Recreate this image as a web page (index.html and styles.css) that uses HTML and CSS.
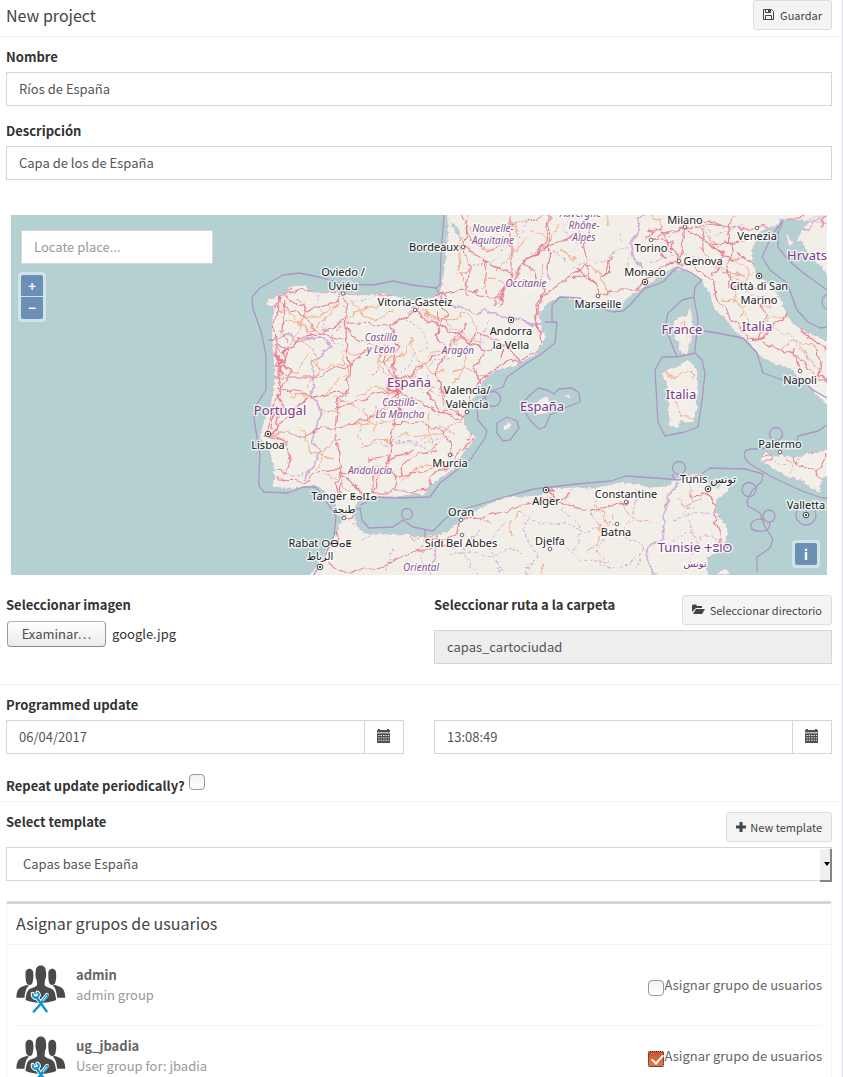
FILE: index.html
```html
<!DOCTYPE html>
<html lang="es">
<head>
<meta charset="utf-8">
<title>New project</title>
<link rel="stylesheet" href="styles.css">
</head>
<body>
<svg class="sprite" aria-hidden="true">
  <symbol id="calendar" viewBox="0 0 13 14">
    <path fill="#4f4f52" d="M0 1h1V0h2v1h7V0h2v1h1v13H0z"/>
    <path fill="#b8b8ba" d="M0 3h13v1.5H0z"/>
    <path stroke="#eee" stroke-width="1" stroke-dasharray="1.4 1" d="M1.3 6.5h10.8M1.3 8.9h10.8M1.3 11.3h10.8" fill="none"/>
  </symbol>
  <symbol id="group" viewBox="50 46 147 147">
    <g fill="#4a4a4a">
      <path d="M51 142c1-18 5-27 16-32l14-5 8 1c-8 5-12 16-14 36-9 1-16 0-24 0zM195 142c-1-18-5-27-16-32l-14-5-8 1c8 5 12 16 14 36 9 1 16 0 24 0z"/>
      <path d="M78 72c-1-20 24-20 23 0 1 14-1 18-2 24s-4 9-9 9-9-4-10-9-2-10-2-24zM145 72c-1-20 24-20 23 0 1 14-1 18-2 24s-4 9-9 9-9-4-10-9-2-10-2-24z"/>
      <path d="M108 65c0-23 30-23 30 0 2 14 0 20-3 26l-1 14c2 5 8 6 17 9 11 3 15 12 17 35-25 11-65 11-90 0 2-23 6-32 17-35 9-3 15-4 17-9l-1-14c-3-6-5-12-3-26z"/>
    </g>
    <g fill="none" stroke="#fff" stroke-width="12" stroke-linecap="round"><path d="M108 138l32 44M141 134l-38 47M99 131c0 10 7 14 13 10s8-8 1-14"/></g>
    <g fill="none" stroke="#1295c9" stroke-width="7" stroke-linecap="round"><path d="M110 141l30 41M126 157l-24 26"/><path stroke-width="6" d="M99 131c0 10 7 14 13 10s8-8 1-14"/></g>
    <path d="M128 153l14-18" stroke="#1295c9" stroke-width="9" stroke-linecap="round"/><path d="M129 151l12-15" stroke="#d4f0fa" stroke-width="3"/>
  </symbol>
</svg>
<form class="page">
  <header class="head">
    <h1 class="title">New project</h1>
    <button type="button" class="btn save"><svg width="11" height="11" viewBox="0 0 11 11" fill="none" stroke="#444"><path d="M.5.5h8l2 2v8H.5z M2.5 10.500V6.500h6v4M2.500.5v3h5v-3"/><path d="M5.500 1h1.500v2H5.500z" fill="#444"/></svg>Guardar</button>
  </header>

  <section class="section">
    <div class="field"><label class="label" for="name">Nombre</label><input class="input" id="name" value="Ríos de España"></div>
    <div class="field"><label class="label" for="desc">Descripción</label><input class="input" id="desc" value="Capa de los de España"></div>

    <div class="map">
      <svg class="tiles" viewBox="11 215 816 360" preserveAspectRatio="xMidYMid slice" role="img" aria-label="Mapa">
        <defs>
          <clipPath id="land"><use href="#coast"/></clipPath>
          <filter id="wander" filterUnits="userSpaceOnUse" x="11" y="205" width="830" height="380"><feTurbulence type="fractalNoise" baseFrequency=".07" numOctaves="3" seed="4"/><feDisplacementMap in="SourceGraphic" scale="11" xChannelSelector="R" yChannelSelector="G"/></filter>
          <filter id="rough" filterUnits="userSpaceOnUse" x="1" y="195" width="850" height="400"><feTurbulence type="fractalNoise" baseFrequency=".25" numOctaves="2" seed="8"/><feDisplacementMap in="SourceGraphic" scale="4" xChannelSelector="R" yChannelSelector="G"/></filter>
        </defs>
        <g filter="url(#rough)">
        <path id="coast" fill="#f2efe9" stroke="#c8b6d3" stroke-width=".7" stroke-linejoin="round" d="M272 320l1-13-7-2 2-6 6-1 4-4 5 2 4-6 5-4 8-1 7 1 2 5 14 2 14-1 23 3 24-2 16 4 10 4 14-1 10-4 4-2 3-7 3-18 4-40-3-25h400v20l-65-5v5l-20 8-8 19 1 13 4 10 10 8 13 15 7 17 7 10 13 8 27 12v67l-20-18-7-10-10-7-7-7-16-5-14-8-13-15-13-10-10-13-10-9-5-16-9-14-13-8-13-3-14 8-18 13-15 10-8 9-12-2-20-2-13-3-10-5-17 8-7 12 2 12 4 10-6 8-3 8-22 12-20 5-10 8-5 10-10 14-6 16 3 10 10 9-10 11-8 10-5 10-10 7-14 10-5 10-8-2-20 3-25 0-12 2-8 14-7 1-8-8-8-10-7-7-8-4-20 4-22-2 2-11-1-13-4-9-2-10-8-5 3-13 7-17 3-13 3-17-3-30z
          M300 590l27-40 10-20 5-12 8-6 5 5 2 8 8 8 22 1 13 1 8-2 5 4 20-2 14-3 10-9 16-11 20-10 14-5 33-2 7-6 26-2 20 1 14-3 13-3 13 1 17 4 18-1 9-8 20-5 10 5 3 9h10l8-7 6 3-7 10-10 7-2 12 7 6 6 12-1 10-7 10-12 8-1 9 5 23z
          M785 230l9 14 7-12 12-15h20v65l-12-15-12-12-8-14-6 1-6 5z
          M690 304l2 12 1 7-1 17-5 15-9-5 1-6-5-6 2-8-3-7 5-5 9-3z
          M688 359l9 11 1 10-1 27-4 15-8 1-4-3-3 8-8-1-2-4 2-4-2-6v-13l1-7-3-10-4-9 4-5 11-2z
          M760 460l5-8 5 1 2 4 8-2 17 2 16-5 20-3v23l-11 6-2 15-10-5-10-8-13-3-17-10z
          M532 407l9-9 7-2 2 7-5 11-7 1zM562 395l7 0 5 4-6-1zM503 427l4-4 5 1-3 5-5 1zM716 575l6-6 8 2-3 4z"/>
        <path fill="#b5d0d0" d="M450 222l5 2 5 8 2 10-6-9z"/>
        </g>

        <g fill="none" stroke="#ab97c3" stroke-width="1.300" stroke-linejoin="round">
          <path d="M444 215l-3 40-1 30-4 3-24-3-19-4-20 4-30-1-24-7-20-4-16 2-23 13-8 9 1 12 8 22 5 24v35l-9 14-3 15 6 36-1 17v14l5 6 24 1 15-6h13l20 29-2 20-10 22-12 20-15 12M268 340h6M436 288l4 6"/>
          <path d="M360 505L365 503 373 497 400 498 430 497 440 483 470 460 485 438 487 431 478 420 477 407 487 393 503 387 507 377 517 370 527 363 540 355 555 343 557 323 552 322 552 305 560 297 580 298 597 307 612 312 623 311 630 305 645 288 650 287 663 282 677 267 690 272 702 280 695 287 694 297 698 320 695 350 695 353 702 360 705 373 702 400 698 427 685 432 665 436 658 422 655 370 662 357 677 357 665 327 668 313 675 307 682 300 694 297M677 357L687 355 695 353M545 322h12"/>
          <circle cx="493" cy="399" r="7.500"/>
          <path d="M704 331L717 333 743 338 757 353 763 373 783 380 800 378 813 390 827 398M783 220L772 235 762 257 770 270 787 283 797 310 808 322 820 328 827 327M783 222L778 232 778 247 788 260 802 272 827 290"/>
          <path d="M355 510l5-2 2 12 7 8 24-1 10-7 10 7 20 4 13-13 15-8 30-9 43-12 42-5 35-3 15-5 15 1 28 2 9 1 22-5 10-7 35 1 18 5-1 7-10 10-5 10 1 5 12 7 5 14 8 12-3 9-13 9v15M425 530v8M675 480l-3-6"/>
          <circle cx="407" cy="514" r="5.500"/><circle cx="679" cy="468" r="6.500"/><circle cx="749" cy="489.500" r="7"/><circle cx="769" cy="516" r="6"/><path d="M764 520c-8-3-14 2-13 7s8 4 12 4 7-2 7-9"/><circle cx="806" cy="515" r="10"/><circle cx="776" cy="434" r="6.500"/><circle cx="830" cy="302" r="8"/>
          <path d="M827 498l-5 0-20-7-30-14-22-13c-8-7-8-15 3-15l22-1M796 448l2-12 20-5 9-6M497 423l10-6 10 4 2 7-9 12-7 1-6-8zM521 405l7-8 10-9 9 2 7 4 5-5 13-1 7 5 1 9-13 5-17 8-5 12-6 2-9-9z"/>
        </g>

        <g clip-path="url(#land)"><g filter="url(#wander)">
          <g fill="none" stroke="#c9a0d0" stroke-width="1.800" opacity=".8" stroke-linejoin="round">
            <path d="M275 338l10-6 8 1 5 8 9-2 18 0 6 7-8 5-3 8-7 3 1 23-6 8 10 10 3 13-7 17-3 10 12 8-11 12-6 15M440 292l17 15 20 6 5-4 22 8 20 6h22M656 575l-8-10-1-14 16-14 4-30 8-26M435 530v30l-4 15"/>
            <path d="M648 215l-11 4 2 10-9 14 6 20 10 9M783 228h25l8-9 11-2"/>
          </g>
          <g fill="none" stroke="#d3abd8" stroke-width="1" stroke-dasharray="3 2">
            <path d="M317 290l5 16 0 22 10 3-2 10 12 4M340 306l30-8 10-4M405 298l8 8-5 12 10 7 8 12 0 10-12 8-8 13-10 10M424 313l10 8 8-4M443 315l10 17 5 20-12 8-14 2-6 14 5 10 18 5 20-3M487 323l-6 30-5 20M460 275l15-10 18-3 14-17M515 252l10-28 6-6M530 252l17-6 14 10 13 10 11-2 4 3 17-4 10-14 10 0"/>
            <path d="M365 408l-5 24 3 14 24-2 26-3 6 3 20-5 9-2M409 443l15 3 8 5 5 22M430 428l12-1 15 5M412 377l8 15 22 4 22-4M277 470l15 5 15-3M650 262l18-6 13-3 19 5 13 8 14 10 15 17 20 5 12 12M655 228l14 8 9-6 22-5 15 8 30-7M440 520l-20 30 5 25M478 530l-15 20 14 25M505 520l-14 23 10 32M534 510l-12 20 13 25-10 20M573 488l-13 22 20 14-5 27M600 490l-8 22 14 20-7 18 11 20M637 490l-3 30-15 12 25 16-9 20M672 520l26-8 22 5M668 545l20-12 34 8M690 480l3 20-10 15 13 22-5 30M770 460l12 6 20-8"/>
            <path d="M360 540l20-10M385 570l9-20-10-14M520 512l20 12 24-2 22 12 30-13M545 540l20 5 15 15 33 2M450 555l20-6 20 9 20-10 16 7M590 560l20 8 25-8M675 500l18 8 12-10M570 215l-8 15 10 12 14 3M620 235l10 20-5 20M765 315l8 15 20 8 12 20M735 335l15-10 20 10"/>
          </g>
          <g fill="none" stroke="#f5aa88" stroke-width="1" stroke-linejoin="round">
            <path d="M277 313l12-3 8 14 15 9 8-12 12-7 5-12M297 298l8 10-3 18-14 22M300 340l13 9 8 18-14 20M280 375l17-2 10-20M290 395l22 2 23-8 12-17-5-20 18 3 20-6M310 360l14 8 22-5M335 330l20-17 22-6 12-12M365 346l14 10 5 18 15 12M374 376l8-25 5-14M383 408l8-24M402 382l16-10 11-16 16-8 15-9M410 340l10 20 13 12 12-2M424 312l17 10 25-8 12 13-3 16M460 345l6 17-10 20-15 10 5 20M452 372l13-3 13 4 12 5M335 398l22 8 15 16 27-2 20-4M340 427l28-4 10-15M300 428l10 25 22 6M315 470l18-28 8-3M360 450l15-8 18-1 15-7 20 2M430 411l-2 20 12 18M350 470l15-5 16-1 18 12M372 483l16-18M400 480l23-15 22 2M305 317l14 0 13-9M420 310l28 13 20 18 14 3M455 275l16-7M495 272l12-11 10-15 11-9M540 252l9-12M470 227l7 17 18 3M510 217l8 18-13 12"/>
            <path d="M560 251l14 8M588 262l10 8 13 25M605 217l5 10M655 215l10 17M690 219l15 12 13 17M731 254l16 18 0 15M722 300l20 2 8 23M740 320l10-22 14 7 17-9M760 330l13-14 17 0M780 350l12-8 20 2M725 275l19 5 15-9M738 285l-7 18M675 333l9-15 5 20M664 372l10 5 16-6 6 6-10 10 3 7M676 398l6 20M682 416h13M790 475l4-12-8-5"/>
            <path d="M405 530l10 10 20-3M344 516l12 8M520 512l-10 9 2 13M596 505l11 18 5-8M600 523l-3 22-10 7M620 502l10 14 20 8M540 575l4-12M575 530l8-7M470 517l22 9M680 505l22-6M690 550l12-12M285 320l18 5 10 14M350 298l15 20 28-4M355 395l20-8 20 6M380 360l22-4 10-14M320 410l20 5M420 440l22-8 18-12M325 475l15 9 15 14M395 400l-16 16-7 18M455 405l-18 10M460 240l-2 30 12 12M480 290l12-12 14 4M520 285l20-4 3-15M530 230l20 10 10-17M800 345l6 14 15 10M700 245l10 18 22 10"/>
          </g>
          <g fill="none" stroke="#e87f94" stroke-width="1.150" stroke-linejoin="round">
            <path d="M282 295l10-2 19-4 35 3 42 1 17 3 20 3 17-5 23-3 35 7 12-17 7-13 15-13 15-9 30-14M275 310l7-15 8-7M283 293l-4 13-5 15 3 22 0 17 5 16-3 20-6 17-5 15-4 7M282 305l20 10 13 16 29 7M285 295l23 15 23-5 13-12M344 293l3 20-1 20 4 32-2 20-10 20-3 22 2 22 4 32-1 14M346 317l-24 17-22 4-18 18M275 378l40 0 15-8 15-3 24-17M277 387l30 9 22-2 18-1M305 397l-15 17-15 18M345 325l12 15 25 10 15 35M348 323l45 1 20-12 11-13M393 325l5 20-3 20 2 25M397 385l12-10 20-15 18-10 15-18 3-8M438 294l10 18-8 12-5 12M414 312l28 14 26 17 17 7 17-5M468 343l13-10 17 6 7 9M485 350l-10 18 7 15M448 350l-10 20 7 30 15 13M438 310l-2 24 10 15M467 414l-12 5-18-9-8-15 8-10M397 390l-25 5-23 9-14 8M397 390l3 22-8 22-2 22-15 35M397 387l18 13 20 11 30 3M392 425l30-2 20 8 8 15 0 10M339 427l14-3 25-10 20-24M268 435l30 0 18-5 22-3M275 480l30 1 13-8 22-4M340 472l35 3 30-1 18-3 20-7M374 491l0-14 15-16 8-5 18-5M367 458l22-3M340 472l-4 14 4 15M340 472l12 10 13 11M375 477l11-5 8 3 2 15M400 474l6-14 23-8M431 448l9-6M375 491l36 0 17-2 6-12 15-13 12-15M277 430l5-17M276 470l10 5 4-18-2-13-18-8M462 453l9-12 8-8-12-19 3-22 15-16 15-10 18-6 22-12 9-6M542 343l-3-22 3-30-8-20-10-10 15-10 7-8 3-40M502 345l8 0 8 14M408 300l-2-8M463 246l5-31M463 248l20 12 28 15M463 248l7 22-2 17 0 10M511 215l0 60-6 14-8 16M505 288l-13 16M511 225l32-10M543 295l33-21 11-10 8 20 4 15M588 272l-15 9M611 260l-9 18 8-8 3-19M599 297l13-8 23 0 10-8M599 297l-5-18-18-10M645 281l16-12 14-6 9 0 23 14 5 3"/>
            <path d="M278 345l12 6-9 14 9 8-8 14M280 330l8 12M277 395l8 12-12 13M276 410l-5 20M285 300l-3 30M275 345l10 12-7 12M280 355l-6 8 10 10M470 400l6 20-9 20M461 215l8 25 18 9 22-6M487 262l-2 30M550 215l-1 65M590 215l-6 30 6 22M546 290l-8 15 3 30M498 350l10-4 8 9"/>
            <path d="M652 238l15-5 18-6 30-2 30 4 20-4M652 238l20 4 6 20M648 228l14 3 10 20M685 227l-4 19-3 17M685 227l-6-12M685 228l25 17 14 11 27 4M725 256l-13 20M735 215l-7 15 4 27-5 10 2 20M729 287l19 0 13 2M712 278l7 25 15 18 15 18 11 1M735 252l16 10 14 15 20 20 8 18M759 340l6-22-5-15M763 342l20 10 15 5 12 14 17 12M791 310l-10 10-12 8-8 13M791 310l11 20 25 20M710 245l40-5M722 273h22M760 225l19 10M780 219h18l5-4M824 216l-3 12M647 238l7-8M800 370l-6-19M812 345l10 14-3 14 8 8M665 215l12 8 15-6 30 8M700 225l5 14-2 12M655 250l12 8"/>
            <path d="M307 575l14-18 15-15 4-25M324 562l20 10 35-5 30-13 30-8 16 2M343 519l12-5M440 545l15-12 6-10M462 520l20-1 20-8 43-12M547 490l8 9 25 10 22 1 22-6 5-4M545 498l13 2 12-6M690 494l15 1 12 9-3 12 5 18 2 13M760 457l13-3 18-2 36-1M791 452l7 14 20 4 9-14M818 470l6 12M440 448l-14 3M760 462l10 0 5-7"/>
          </g>
          <g fill="none" stroke="#e8788e" stroke-width="1.800"><path d="M388 382l8-4 8 5-5 8-9-2zM276 355l5 5-4 4M269 434l7-4M397 378l-2 18M758 341l7-4M507 352l-6 5M546 490l9 2"/></g>
        </g></g>

        <g fill="#fff" stroke="#666" stroke-width="1"><circle cx="463" cy="247" r="1.800"/><circle cx="343" cy="293.500" r="1.800"/><circle cx="415" cy="310" r="1.800"/><circle cx="467" cy="412" r="1.800"/><circle cx="450" cy="455" r="1.800"/><circle cx="344" cy="518" r="1.800"/><circle cx="461" cy="520" r="1.800"/><circle cx="462" cy="535" r="1.800"/><circle cx="550" cy="549" r="1.800"/><circle cx="617" cy="524" r="1.800"/><circle cx="626" cy="502" r="1.800"/><circle cx="780" cy="452" r="1.800"/><circle cx="800" cy="371" r="1.800"/><circle cx="598" cy="296" r="1.800"/><circle cx="651" cy="240" r="1.800"/><circle cx="685" cy="227" r="1.800"/><circle cx="757" cy="228" r="1.800"/><circle cx="679" cy="261" r="1.800"/></g>
        <g stroke="#444" stroke-width="1"><g fill="#fff"><circle cx="511" cy="320" r="2.800"/><circle cx="268" cy="434" r="2.800"/><circle cx="645" cy="282" r="2.800"/><circle cx="759" cy="276" r="2.800"/><circle cx="546" cy="490" r="2.800"/><circle cx="708" cy="489" r="2.800"/><circle cx="806" cy="515" r="2.800"/><circle cx="320" cy="567" r="2.800"/></g><path stroke-width="2" d="M510 320h2M267 434h2M644 282h2M758 276h2M545 490h2M707 489h2M805 515h2M319 567h2"/></g>

        <g class="city">
          <text x="434" y="251">Bordeaux</text><text x="343" y="276">Oviedo /</text><text x="343" y="290">Uviéu</text><text x="415" y="306">Vitoria-Gasteiz</text><text x="511" y="335">Andorra</text><text x="511" y="349">la Vella</text><text x="467" y="394">Valencia/</text><text x="467" y="408">València</text><text x="268" y="449">Lisboa</text><text x="450" y="467">Murcia</text><text x="344" y="500">Tanger <tspan class="tifinagh">ⵟⴰⵏⵊⴰ</tspan></text><text x="344" y="513" class="small">طنجة</text><text x="320" y="547">Rabat <tspan class="tifinagh">ⵔⴱⴰⵟ</tspan></text><text x="320" y="560" class="small">الرباط</text><text x="461" y="516">Oran</text><text x="461" y="547">Sidi Bel Abbes</text><text x="546" y="505">Alger</text><text x="550" y="545">Djelfa</text><text x="616" y="536">Batna</text><text x="626" y="498">Constantine</text><text x="708" y="483">Tunis تونس</text><text x="806" y="509">Valletta</text><text x="780" y="448">Palermo</text><text x="800" y="384">Napoli</text><text x="598" y="308">Marseille</text><text x="645" y="276">Monaco</text><text x="651" y="252">Torino</text><text x="685" y="224">Milano</text><text x="757" y="240">Venezia</text><text x="703" y="265">Genova</text><text x="759" y="290">Città di San</text><text x="759" y="304">Marino</text>
        </g>
        <g class="region">
          <text x="493" y="232">Nouvelle-</text><text x="493" y="244">Aquitaine</text><text x="526" y="287">Occitanie</text><text x="582" y="217">Auvergne-</text><text x="584" y="229">Rhône-</text><text x="584" y="241">Alpes</text><text x="381" y="341">Castilla</text><text x="381" y="353">y León</text><text x="458" y="354">Aragón</text><text x="400" y="406">Castilla-</text><text x="400" y="418">La Mancha</text><text x="370" y="474">Andalucía</text><text x="421" y="571">Oriental</text>
        </g>
        <g class="country">
          <text x="409" y="387">España</text><text x="280" y="415">Portugal</text><text x="542" y="411">España</text><text x="682" y="334">France</text><text x="681" y="399">Italia</text><text x="757" y="331">Italia</text><text x="807" y="260">Hrvats</text><text x="695" y="552">Tunisie <tspan class="tifinagh">ⵜⵓⵏⵙ</tspan></text><text class="small" x="695" y="567">تونس</text>
        </g>
      </svg>
      <input class="input locate" placeholder="Locate place..." aria-label="Locate place">
      <div class="tools zoom"><button type="button">+</button><button type="button">−</button></div>
      <div class="tools info"><button type="button">i</button></div>
    </div>

    <div class="columns">
      <div class="field">
        <label class="label" for="image">Seleccionar imagen</label>
        <div class="file"><button type="button" class="browse">Examinar…</button><span>google.jpg</span><input type="file" id="image" hidden></div>
      </div>
      <div class="field">
        <div class="split"><label class="label" for="folder">Seleccionar ruta a la carpeta</label>
        <button type="button" class="btn"><svg width="13" height="11" viewBox="0 0 13 11" fill="#444"><path d="M0 8V1.500L1 .5h3l1 1.500h4.500l.5.500V4H4zM1 10l3-5h9l-3 5z"/></svg>Seleccionar directorio</button></div>
        <input class="input" id="folder" value="capas_cartociudad" readonly>
      </div>
    </div>
  </section>

  <section class="section">
    <div class="columns">
      <div class="field"><label class="label" for="date">Programmed update</label>
        <div class="group"><input class="input" id="date" value="06/04/2017"><button type="button" class="addon" aria-label="Fecha"><svg width="13" height="14"><use href="#calendar"/></svg></button></div></div>
      <div class="field end">
        <div class="group"><input class="input" value="13:08:49" aria-label="Hora"><button type="button" class="addon" aria-label="Hora"><svg width="13" height="14"><use href="#calendar"/></svg></button></div></div>
    </div>
    <div class="repeat"><label class="label" for="repeat">Repeat update periodically?</label><input type="checkbox" class="check" id="repeat"></div>
  </section>

  <section class="section">
    <div class="split"><label class="label" for="template">Select template</label>
    <button type="button" class="btn plus"><svg width="10" height="10" viewBox="0 0 10 10" fill="#444"><path d="M3.500 0h3v3.500H10v3H6.500V10h-3V6.500H0v-3h3.500z"/></svg>New template</button></div>
    <div class="select"><select class="input" id="template"><option>Capas base España</option></select></div>

    <div class="box">
      <h2 class="title">Asignar grupos de usuarios</h2>
      <ul class="users">
        <li><svg width="50" height="50"><use href="#group"/></svg><div class="who"><b>admin</b><span>admin group</span></div><label class="assign"><input type="checkbox" class="check">Asignar grupo de usuarios</label></li>
        <li><svg width="50" height="50"><use href="#group"/></svg><div class="who"><b>ug_jbadia</b><span>User group for: jbadia</span></div><label class="assign"><input type="checkbox" class="check" checked>Asignar grupo de usuarios</label></li>
      </ul>
    </div>
  </section>
</form>
</body>
</html>
```
FILE: styles.css
```css
* { box-sizing: border-box; }
body { margin: 0; background: #fff; color: #333; font: 13px/20px "Noto Sans CJK SC", "Open Sans", sans-serif; }
input, select, button { font: inherit; color: #555; }
.sprite { position: absolute; width: 0; height: 0; }
.page { height: 100vh; overflow: auto; scrollbar-width: none; border-right: 1px solid #dddfe8; }
.title { margin: 0; font-size: 16px; line-height: 20px; font-weight: 400; color: #444; }
.head { display: flex; justify-content: space-between; height: 37px; padding: 0 10px 0 6px; border-bottom: 1px solid #f4f4f4; }
.head .title { padding-top: 5px; }
.btn { display: flex; align-items: center; justify-content: center; gap: 5px; height: 30px; padding: 0 9px 1px; border: 1px solid #ddd; border-radius: 3px; background: #f4f4f4; color: #444; font-size: 11px; white-space: nowrap; }
.save { gap: 6px; }
.plus { gap: 4px; }
.section { padding: 10px 10px 20px 6px; border-bottom: 1px solid #f4f4f4; }
.section:nth-of-type(2) { padding-bottom: 5px; }
.section:last-child { border: 0; }
.label { display: block; height: 25px; font-weight: 700; }
.field { min-width: 0; margin-bottom: 15px; }
.input { display: block; width: 100%; height: 34px; padding: 5px 12px 7px; border: 1px solid #d2d6de; border-radius: 0; background: #fff; outline: 0; }
.input[readonly] { background: #eee; }
.input::placeholder { color: #999; opacity: 1; }
.map { position: relative; height: 360px; margin: 35px 5px 20px; overflow: hidden; background: #b5d0d0; }
.tiles { display: block; width: 100%; height: 100%; }
.tiles text { text-anchor: middle; font-family: "Noto Sans", "DejaVu Sans", sans-serif; paint-order: stroke; stroke: rgba(255,255,255,.7); stroke-width: 3px; stroke-linejoin: round; }
.city { font-size: 11px; fill: #222; }
.region { font-size: 10px; font-style: italic; fill: #84548f; }
.country { font-size: 13px; fill: #7d3b87; }
.tiles .small { font-size: 10px; }
.city .tifinagh { font-size: 10px; }
.country .tifinagh { font-size: 11px; }
.locate { position: absolute; top: 15px; left: 10px; width: 192px; }
.tools { position: absolute; padding: 3px; border-radius: 4px; background: rgba(255,255,255,.4); }
.tools button { display: block; width: 22px; height: 22px; padding: 0; border: 0; background: #6b8fb6; color: #fff; font-weight: 700; line-height: 20px; }
.zoom { top: 57px; left: 7px; }
.tools button:first-child:not(:last-child) { height: 21px; margin-bottom: 1px; border-radius: 2px 2px 0 0; }
.zoom button:last-child { border-radius: 0 0 2px 2px; }
.info { right: 7px; bottom: 7px; }
.info button { border-radius: 2px; font-size: 14px; }
.columns { display: grid; grid-template-columns: 1fr 1fr; gap: 30px; }
.columns .field { margin: 0; }
.split { display: flex; justify-content: space-between; height: 35px; }
.end { align-self: end; }
.file { display: flex; align-items: center; gap: 6px; height: 28px; padding-left: 1px; }
.browse { width: 99px; height: 26px; padding: 0; border: 1px solid #999; border-color: #b5b5b5 #999 #888; border-radius: 4px; background: linear-gradient(#fff, #ebebeb); color: #4c4c4c; font-size: 13px; line-height: 20px; }
.group { display: flex; }
.addon { flex: 0 0 40px; height: 34px; margin-left: -1px; padding: 0 2px 2px 0; border: 1px solid #d2d6de; background: #fff; }
.addon svg { display: block; margin: 0 auto; }
.repeat { display: flex; gap: 4px; align-items: start; margin-top: 20px; }
.repeat .label { height: 22px; padding-top: 2px; }
.check { appearance: none; position: relative; flex: none; width: 16px; height: 16px; margin: 0; border: 1px solid #999; border-radius: 4px; background: linear-gradient(#f1f1f1, #fff); }
.check:checked { border: 1px dotted #222; border-radius: 2px; background: linear-gradient(#cf5428, #e4794d); }
.check:checked::after { content: ""; position: absolute; left: 5px; top: 0; width: 5px; height: 10px; border: solid #fff; border-width: 0 2px 2px 0; transform: rotate(42deg); }
.select { position: relative; }
.select select { appearance: none; padding: 0 16px; }
.select::before { content: ""; position: absolute; right: 0; top: 2px; width: 10px; height: 31px; border: solid #858585; border-width: 0 2px 2px 0; background: #f0f0ee; pointer-events: none; }
.select::after { content: ""; position: absolute; right: 2px; top: 15px; border: 3px solid transparent; border-top: 4px solid #000; border-bottom: 0; pointer-events: none; }
.box { margin-top: 20px; border: 1px solid #f4f4f4; border-top: 3px solid #d2d6de; border-radius: 3px; }
.box .title { padding: 9px 9px 11px; border-bottom: 1px solid #f4f4f4; }
.users { margin: 0; padding: 10px 9px; list-style: none; }
.users li { display: flex; gap: 10px; padding: 10px 0; border-bottom: 1px solid #f4f4f4; }
.users li:last-child { border: 0; }
.users svg { flex: none; }
.who { flex: 1; }
.who b { display: block; color: #666; }
.who span { color: #999; }
.assign { display: flex; gap: 1px; padding-top: 10px; color: #666; }
.assign .check { margin-top: 5px; }
```
